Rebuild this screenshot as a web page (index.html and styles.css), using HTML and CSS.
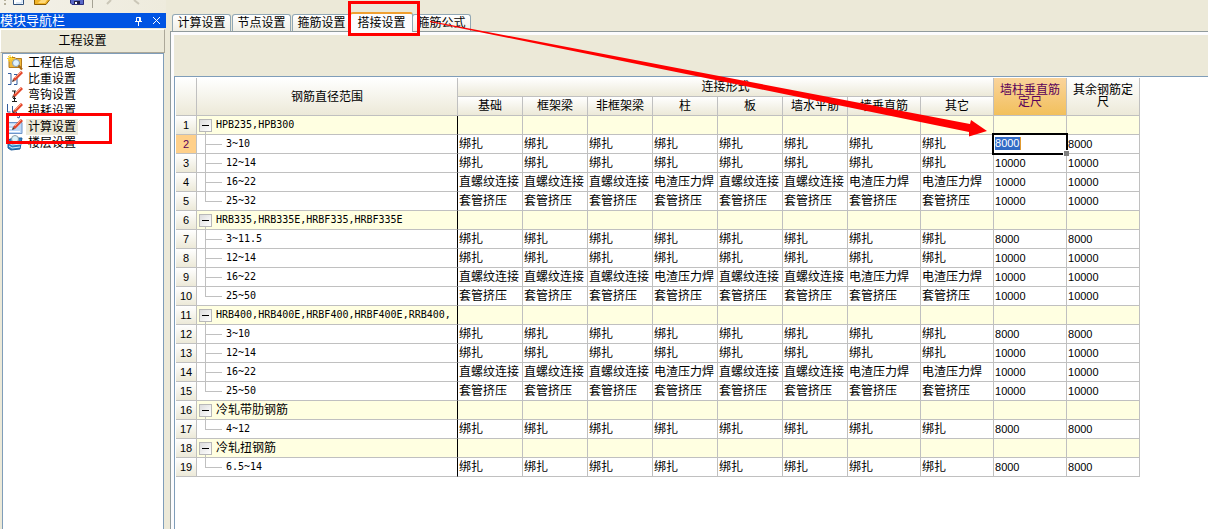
FILE: index.html
```html
<!DOCTYPE html>
<html lang="zh-CN">
<head>
<meta charset="utf-8">
<title>工程设置 - 搭接设置</title>
<link rel="stylesheet" href="styles.css">
</head>
<body>
<div class="app">
  <aside class="sidebar">
    <div class="toolbar">
      <svg width="166" height="13" viewBox="0 0 166 13" aria-hidden="true">
        <path d="M4 0h2v1H4zM4 3h2v2H4z" fill="#b5b09c"/>
        <path d="M13.500 0V4.500H23.500V0" fill="#fff" stroke="#31517b"/><path d="M16 3h6V0" fill="none" stroke="#b8d4f0"/>
        <path d="M34.500 0V4.500H46L49.500 0" fill="#f0b429" stroke="#8a5a00"/><path d="M38 3l3-3h6l-2 3z" fill="#ffd978"/>
        <path d="M70.500 0V3L72 4.500H83.500V0" fill="#5969c8" stroke="#292c7b"/><path d="M74 1h6v3h-6z" fill="#20204a"/><path d="M75 2h2v2h-2z" fill="#fff"/>
        <path d="M92.500 0V8" stroke="#a5a294"/>
        <path d="M111 0l-4 4M134 0l5 4" stroke="#cbc7b8" stroke-width="2"/>
      </svg>
    </div>
    <div class="dock-title">
      <span>模块导航栏</span>
      <button class="dock-btn" type="button" aria-label="固定"><svg width="9" height="10" viewBox="0 0 9 10"><path d="M2.500 5V1.500H6.500V5M5.500 1V5M1 5.500H8M4.500 6V10" fill="none" stroke="#fff"/></svg></button>
      <button class="dock-btn" type="button" aria-label="关闭"><svg width="9" height="9" viewBox="0 0 9 9"><path d="M1 1l7 7M8 1l-7 7" stroke="#fff"/></svg></button>
    </div>
    <button class="section" type="button">工程设置</button>
    <nav class="nav">
      <a href="#info" class="nav-item"><svg viewBox="0 0 16 16"><path d="M2 2.500h6l1 1h5.500v9H2z" fill="#f0b93c" stroke="#b37b1d"/><path d="M3 0v7M0 3.500h7M1 1l5 5M6 1L1 6" stroke="#ffd52e"/><circle cx="9" cy="8" r="3.500" fill="#dff3ff" stroke="#8599ad"/><path d="M11.500 10.500l3.500 4" stroke="#a76812" stroke-width="2"/></svg><span>工程信息</span></a>
      <a href="#weight" class="nav-item"><svg viewBox="0 0 16 16"><path d="M1 2.500h3v11H1M7 3.500h3v10H7" fill="none" stroke="#335c9b"/><path d="M7 9l8-8" stroke="#e3462b" stroke-width="3"/><path d="M8 7l6-6" stroke="#ff9e80"/><path d="M5 11l1-3 2 2z" fill="#55362c"/></svg><span>比重设置</span></a>
      <a href="#hook" class="nav-item"><svg viewBox="0 0 16 16"><path d="M5 4h4M7.500 4v10M5 14.500h5M6 11.500h3" stroke="#1c1c1c" fill="none"/><path d="M7 9l8-8" stroke="#e3462b" stroke-width="3"/><path d="M8 7l6-6" stroke="#ff9e80"/><path d="M5 11l1-3 2 2z" fill="#55362c"/></svg><span>弯钩设置</span></a>
      <a href="#loss" class="nav-item"><svg viewBox="0 0 16 16"><path d="M.5 1v8h3M5.500 3v6h4v4M10 14l2 1 1-3" fill="none" stroke="#335c9b"/><path d="M7 9l8-8" stroke="#e3462b" stroke-width="3"/><path d="M8 7l6-6" stroke="#ff9e80"/><path d="M5 11l1-3 2 2z" fill="#55362c"/></svg><span>损耗设置</span></a>
      <a href="#calc" class="nav-item current" aria-current="page"><svg viewBox="0 0 16 16"><path d="M1 3.500h14v11H1z" fill="#bcd8f7" stroke="#6c94c9"/><path d="M2 6h8M2 12.500h11M2 9.500h3" stroke="#fff"/><path d="M7 9l8-8" stroke="#e3462b" stroke-width="3"/><path d="M8 7l6-6" stroke="#ff9e80"/><path d="M5 11l1-3 2 2z" fill="#55362c"/></svg><span>计算设置</span></a>
      <a href="#floor" class="nav-item"><svg viewBox="0 0 16 16"><path d="M1 5l5-2h9l-2 11-9 1-3-2z" fill="#2d83c4" stroke="#1d5e9c"/><path d="M2 8l3 2 9-1M2 11l3 2 8-1" fill="none" stroke="#d9efff"/><circle cx="8" cy="4" r="3.500" fill="#d8f2fa" stroke="#8c9da8"/></svg><span>楼层设置</span></a>
    </nav>
  </aside>

  <main class="main">
    <div class="tabs" role="tablist">
      <button class="tab" role="tab" type="button">计算设置</button>
      <button class="tab" role="tab" type="button">节点设置</button>
      <button class="tab" role="tab" type="button">箍筋设置</button>
      <button class="tab active" role="tab" type="button" aria-selected="true">搭接设置</button>
      <button class="tab" role="tab" type="button">箍筋公式</button>
    </div>
    <section class="pane">
      <div class="pane-strip"></div>
      <div class="frame">
        <table class="grid">
          <colgroup><col class="c-num"><col class="c-name"><col span="6" class="c-mid"><col span="4" class="c-wide"></colgroup>
          <thead>
            <tr><th rowspan="2"></th><th rowspan="2">钢筋直径范围</th><th colspan="8">连接形式</th><th rowspan="2" class="hot">墙柱垂直筋定尺</th><th rowspan="2" class="wrap">其余钢筋定尺</th></tr>
            <tr><th>基础</th><th>框架梁</th><th>非框架梁</th><th>柱</th><th>板</th><th>墙水平筋</th><th>墙垂直筋</th><th>其它</th></tr>
          </thead>
          <tbody>
            <tr class="group"><th>1</th><td><button class="fold" type="button" aria-label="折叠"></button>HPB235,HPB300</td><td></td><td></td><td></td><td></td><td></td><td></td><td></td><td></td><td></td><td></td></tr>
            <tr><th class="hot">2</th><td>3~10</td><td>绑扎</td><td>绑扎</td><td>绑扎</td><td>绑扎</td><td>绑扎</td><td>绑扎</td><td>绑扎</td><td>绑扎</td><td class="editing"><div class="editor"><input type="text" value="8000" aria-label="墙柱垂直筋定尺"></div></td><td>8000</td></tr>
            <tr><th>3</th><td>12~14</td><td>绑扎</td><td>绑扎</td><td>绑扎</td><td>绑扎</td><td>绑扎</td><td>绑扎</td><td>绑扎</td><td>绑扎</td><td>10000</td><td>10000</td></tr>
            <tr><th>4</th><td>16~22</td><td>直螺纹连接</td><td>直螺纹连接</td><td>直螺纹连接</td><td>电渣压力焊</td><td>直螺纹连接</td><td>直螺纹连接</td><td>电渣压力焊</td><td>电渣压力焊</td><td>10000</td><td>10000</td></tr>
            <tr class="last"><th>5</th><td>25~32</td><td>套管挤压</td><td>套管挤压</td><td>套管挤压</td><td>套管挤压</td><td>套管挤压</td><td>套管挤压</td><td>套管挤压</td><td>套管挤压</td><td>10000</td><td>10000</td></tr>
            <tr class="group"><th>6</th><td><button class="fold" type="button" aria-label="折叠"></button>HRB335,HRB335E,HRBF335,HRBF335E</td><td></td><td></td><td></td><td></td><td></td><td></td><td></td><td></td><td></td><td></td></tr>
            <tr><th>7</th><td>3~11.5</td><td>绑扎</td><td>绑扎</td><td>绑扎</td><td>绑扎</td><td>绑扎</td><td>绑扎</td><td>绑扎</td><td>绑扎</td><td>8000</td><td>8000</td></tr>
            <tr><th>8</th><td>12~14</td><td>绑扎</td><td>绑扎</td><td>绑扎</td><td>绑扎</td><td>绑扎</td><td>绑扎</td><td>绑扎</td><td>绑扎</td><td>10000</td><td>10000</td></tr>
            <tr><th>9</th><td>16~22</td><td>直螺纹连接</td><td>直螺纹连接</td><td>直螺纹连接</td><td>电渣压力焊</td><td>直螺纹连接</td><td>直螺纹连接</td><td>电渣压力焊</td><td>电渣压力焊</td><td>10000</td><td>10000</td></tr>
            <tr class="last"><th>10</th><td>25~50</td><td>套管挤压</td><td>套管挤压</td><td>套管挤压</td><td>套管挤压</td><td>套管挤压</td><td>套管挤压</td><td>套管挤压</td><td>套管挤压</td><td>10000</td><td>10000</td></tr>
            <tr class="group"><th>11</th><td><button class="fold" type="button" aria-label="折叠"></button>HRB400,HRB400E,HRBF400,HRBF400E,RRB400,</td><td></td><td></td><td></td><td></td><td></td><td></td><td></td><td></td><td></td><td></td></tr>
            <tr><th>12</th><td>3~10</td><td>绑扎</td><td>绑扎</td><td>绑扎</td><td>绑扎</td><td>绑扎</td><td>绑扎</td><td>绑扎</td><td>绑扎</td><td>8000</td><td>8000</td></tr>
            <tr><th>13</th><td>12~14</td><td>绑扎</td><td>绑扎</td><td>绑扎</td><td>绑扎</td><td>绑扎</td><td>绑扎</td><td>绑扎</td><td>绑扎</td><td>10000</td><td>10000</td></tr>
            <tr><th>14</th><td>16~22</td><td>直螺纹连接</td><td>直螺纹连接</td><td>直螺纹连接</td><td>电渣压力焊</td><td>直螺纹连接</td><td>直螺纹连接</td><td>电渣压力焊</td><td>电渣压力焊</td><td>10000</td><td>10000</td></tr>
            <tr class="last"><th>15</th><td>25~50</td><td>套管挤压</td><td>套管挤压</td><td>套管挤压</td><td>套管挤压</td><td>套管挤压</td><td>套管挤压</td><td>套管挤压</td><td>套管挤压</td><td>10000</td><td>10000</td></tr>
            <tr class="group"><th>16</th><td class="cjk"><button class="fold" type="button" aria-label="折叠"></button>冷轧带肋钢筋</td><td></td><td></td><td></td><td></td><td></td><td></td><td></td><td></td><td></td><td></td></tr>
            <tr class="last"><th>17</th><td>4~12</td><td>绑扎</td><td>绑扎</td><td>绑扎</td><td>绑扎</td><td>绑扎</td><td>绑扎</td><td>绑扎</td><td>绑扎</td><td>8000</td><td>8000</td></tr>
            <tr class="group"><th>18</th><td class="cjk"><button class="fold" type="button" aria-label="折叠"></button>冷轧扭钢筋</td><td></td><td></td><td></td><td></td><td></td><td></td><td></td><td></td><td></td><td></td></tr>
            <tr class="last"><th>19</th><td>6.5~14</td><td>绑扎</td><td>绑扎</td><td>绑扎</td><td>绑扎</td><td>绑扎</td><td>绑扎</td><td>绑扎</td><td>绑扎</td><td>8000</td><td>8000</td></tr>
          </tbody>
        </table>
      </div>
    </section>
  </main>

  <svg class="marks" width="1208" height="529" viewBox="0 0 1208 529" aria-hidden="true">
    <rect x="349.500" y="2.500" width="69" height="32" fill="none" stroke="#f00" stroke-width="3"/>
    <rect x="7.500" y="114.500" width="103" height="28" fill="none" stroke="#f00" stroke-width="3"/>
    <path d="M430 21L740 80L970 124L971 120L987 131L969 136.500L969 132L740 85L430 22Z" fill="#f00"/>
  </svg>
</div>
</body>
</html>
```

FILE: styles.css
```css
* { box-sizing: border-box; }

body {
  margin: 0;
  background: #ece9d8;
  color: #000;
  font: 12px/16px "Liberation Sans", "Noto Sans CJK SC", sans-serif;
}

button {
  margin: 0;
  padding: 0;
  font: inherit;
  color: inherit;
}

.app {
  position: relative;
  display: flex;
  gap: 4px;
  min-height: 100vh;
  overflow: hidden;
}

/* Sidebar */
.sidebar {
  display: flex;
  flex-direction: column;
  flex: 0 0 166px;
}

.toolbar {
  height: 13px;
  background: linear-gradient(90deg, #f3f1e8, #eeebdd);
}

.toolbar svg { display: block; }

.dock-title {
  display: flex;
  align-items: center;
  height: 15px;
  padding-right: 5px;
  background: #0054e3;
  color: #fff;
  line-height: 15px;
}

.dock-title span {
  flex: 1;
  font-size: 13px;
}

.dock-btn {
  display: flex;
  align-items: center;
  justify-content: center;
  width: 26px;
  height: 15px;
  border: 0;
  background: none;
}

.dock-btn:last-child { width: 10px; }

.section {
  height: 24px;
  margin: 1px 1px 0 0;
  border: 1px solid #aca899;
  border-top-color: #fff;
  border-left-color: #fff;
  background: #ece9d8;
  text-align: center;
}

.nav {
  flex: 1;
  margin: 0 2px 0 2px;
  padding-top: 1px;
  border: 1px solid #7f9db9;
  border-bottom: 0;
  background: #fff;
}

.nav-item {
  display: flex;
  align-items: center;
  height: 16px;
  gap: 3px;
  padding-left: 4px;
  color: #000;
  text-decoration: none;
}

.nav-item svg {
  width: 16px;
  height: 16px;
}

.nav-item span { padding: 0 2px; }
.nav-item.current span { background: #ece9d8; }

/* Tabs */
.main {
  display: flex;
  flex-direction: column;
  flex: 1;
  min-width: 0;
  padding-top: 12px;
}

.tabs {
  display: flex;
  align-items: flex-end;
  gap: 1px;
  height: 19px;
  padding-left: 2px;
}

.tab {
  width: 59px;
  height: 17px;
  border: 1px solid #91a7b4;
  border-bottom: 0;
  border-radius: 3px 3px 0 0;
  background: linear-gradient(#fff, #f0efe6);
  line-height: 16px;
  text-align: center;
  white-space: nowrap;
}

.tab.active {
  z-index: 1;
  width: 63px;
  height: 20px;
  margin: 0 -2px -1px;
  border-top: 2px solid #f0a030;
  background: #fcfcfe;
}

.pane {
  display: flex;
  flex-direction: column;
  flex: 1;
  padding: 3px 0 0 3px;
  border-top: 1px solid #919b9c;
  border-left: 1px solid #919b9c;
  background: #fcfcfe;
}

.pane-strip {
  height: 41px;
  background: #ece9d8;
}

.frame {
  flex: 1;
  padding: 1px;
  border-top: 1px solid #7f9db9;
  border-left: 1px solid #7f9db9;
  background: #fff;
}

/* Grid */
.grid {
  width: 964px;
  table-layout: fixed;
  border-collapse: separate;
  border-spacing: 0;
}

.c-num { width: 21px; }
.c-name { width: 261px; }
.c-mid { width: 65px; }
.c-wide { width: 73px; }

.grid tr { height: 19px; }

.grid th,
.grid td {
  height: 19px;
  padding: 0;
  border-right: 1px solid #c0c0c0;
  border-bottom: 1px solid #c0c0c0;
  line-height: 18px;
  font-weight: normal;
  white-space: nowrap;
}

.grid th { background: linear-gradient(#fff, #ece9d8); }

.grid thead .hot,
.grid thead .wrap {
  padding: 0 6px 2px;
  line-height: 12px;
  white-space: normal;
}

.grid .hot { color: #5a005a; }
.grid thead .hot { background: linear-gradient(#fad49c, #f2c05c); }
.grid tbody .hot { background: #ffd08a; }

.grid tbody th { font-size: 11px; }

.grid td { padding-left: 1px; }

.grid td:nth-child(2) {
  padding-left: 29px;
  border-right-color: #000;
  font: 10px/18px "DejaVu Sans Mono", "Noto Sans CJK SC", monospace;
  background:
    linear-gradient(#c0c0c0, #c0c0c0) 8px 0 / 1px 100% no-repeat,
    linear-gradient(#c0c0c0, #c0c0c0) 8px 9px / 17px 1px no-repeat;
}

.grid .last td:nth-child(2) {
  background:
    linear-gradient(#c0c0c0, #c0c0c0) 8px 0 / 1px 10px no-repeat,
    linear-gradient(#c0c0c0, #c0c0c0) 8px 9px / 17px 1px no-repeat;
}

.grid .group td { background: #ffffe1; }

.grid .group td:nth-child(2) {
  padding-left: 2px;
  background: linear-gradient(#c0c0c0, #c0c0c0) 8px 100% / 1px 4px no-repeat #ffffe1;
}

.grid .group td.cjk:nth-child(2) {
  font: 12px/18px "Liberation Sans", "Noto Sans CJK SC", sans-serif;
}

.grid td:nth-child(n+11) { font-size: 11px; }

.fold {
  width: 13px;
  height: 13px;
  margin-right: 4px;
  border: 1px solid #b8b8b8;
  background:
    linear-gradient(#000, #000) 50% 50% / 7px 1px no-repeat,
    linear-gradient(135deg, #dcdcdc, #fff);
  vertical-align: middle;
}

.grid .editing { position: relative; }

.editor {
  position: absolute;
  inset: -2px;
  border: 2px solid #000;
  background: #fff;
}

.editor::after {
  content: "";
  position: absolute;
  right: -3px;
  bottom: -3px;
  width: 5px;
  height: 5px;
  border: 1px solid #fff;
  border-right: 0;
  border-bottom: 0;
  background: #808080;
}

.editor input {
  display: block;
  width: 26px;
  height: 13px;
  margin: 2px 0 0 1px;
  padding: 0;
  border: 0;
  border-right: 1px solid #e09a30;
  background: #316ac5;
  color: #fff;
  font: 11px/13px "Liberation Sans", sans-serif;
}

/* Callout overlay */
.marks {
  position: absolute;
  top: 0;
  left: 0;
  z-index: 2;
  pointer-events: none;
}
```
